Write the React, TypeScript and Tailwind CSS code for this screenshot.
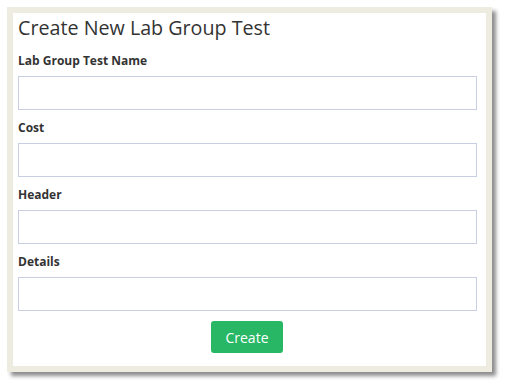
export default function App() {
  const fields = ["Lab Group Test Name", "Cost", "Header", "Details"];

  return (
    <div className="min-h-[387px] bg-white pl-[7px] pt-[7px] font-['Open_Sans',sans-serif]">
      <div className="w-[485px] border-[6px] border-[#eeebe1] bg-white shadow-[4px_4px_4px_rgba(0,0,0,0.45)]">
        <div className="pl-[5px] pt-[1px] pb-[13px]">
          <h1 className="mb-[11px] text-[19.7px] leading-[28px] text-[#333333]">
            Create New Lab Group Test
          </h1>
          {fields.map((label) => (
            <div key={label} className="mb-[10px]">
              <label className="mb-[7px] block text-[12px] font-bold leading-[16px] text-[#333333]">
                {label}
              </label>
              <input
                type="text"
                className="block h-[34px] w-[459px] border border-[#c8cfe3] bg-white px-2 text-sm outline-none"
              />
            </div>
          ))}
          <div className="flex w-[458px] justify-center">
            <button className="h-[32px] w-[72px] rounded-[3px] bg-[#27b765] text-[14px] text-white">
              Create
            </button>
          </div>
        </div>
      </div>
    </div>
  );
}
